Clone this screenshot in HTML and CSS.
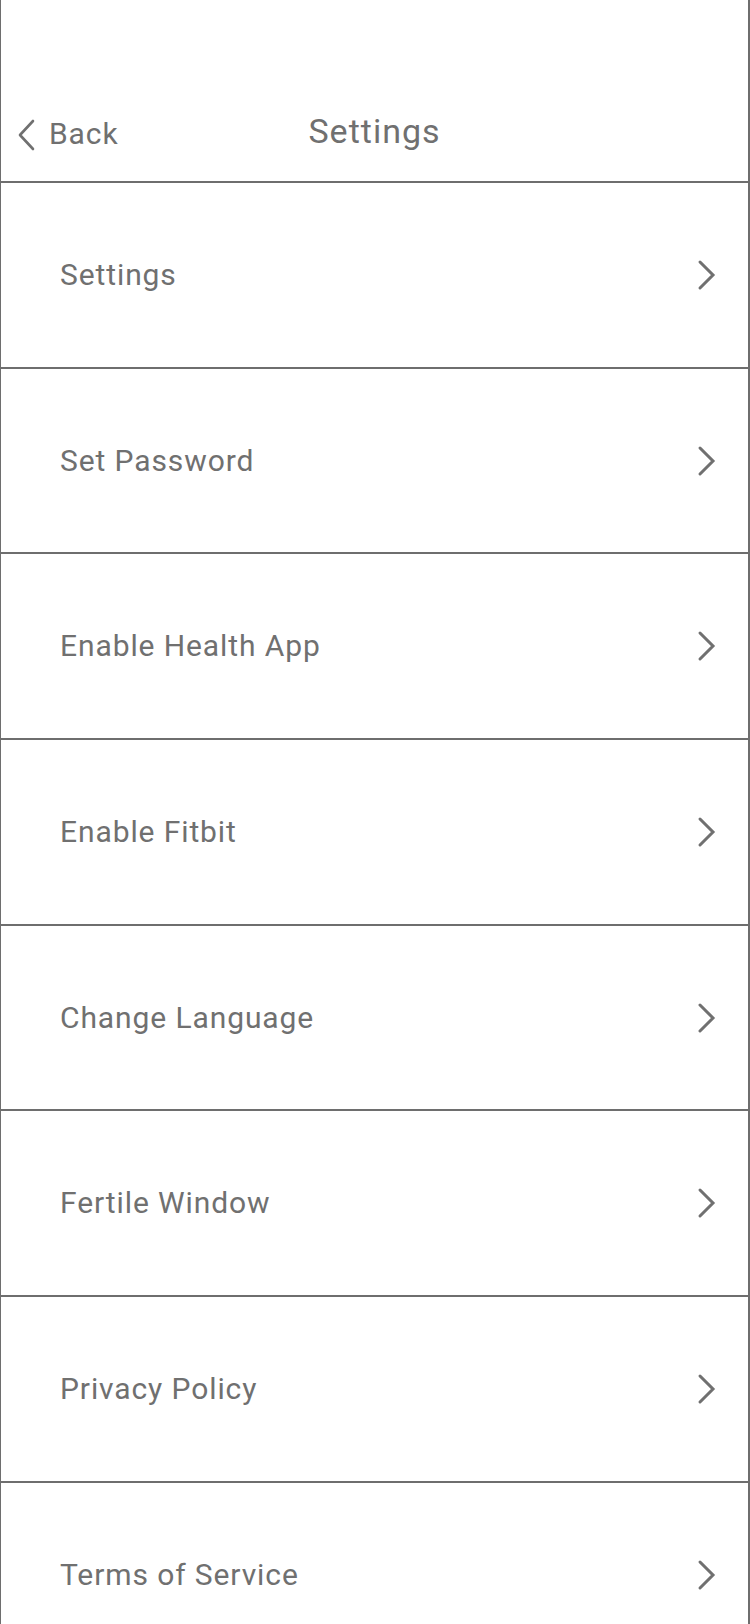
FILE: index.html
```html
<!DOCTYPE html>
<html lang="en">
<head>
<meta charset="utf-8">
<title>Settings</title>
<link rel="stylesheet" href="styles.css">
</head>
<body>
<div class="screen">
  <header class="nav">
    <a class="back">
      <svg class="back-icon" width="18" height="32" viewBox="0 0 18 32" aria-hidden="true"><polyline points="15,2 2,16 15,30" fill="none" stroke="#707070" stroke-width="2.6" stroke-linecap="round" stroke-linejoin="round"/></svg>
      <span>Back</span>
    </a>
    <h1 class="title">Settings</h1>
    <span class="spacer"></span>
  </header>
  <ul class="list">
    <li class="row"><span class="label">Settings</span><svg class="chev" width="20" height="32" viewBox="0 0 20 32"><polyline points="3,3 16,16 3,29" fill="none" stroke="#707070" stroke-width="3" stroke-linecap="round"/></svg></li>
    <li class="row"><span class="label">Set Password</span><svg class="chev" width="20" height="32" viewBox="0 0 20 32"><polyline points="3,3 16,16 3,29" fill="none" stroke="#707070" stroke-width="3" stroke-linecap="round"/></svg></li>
    <li class="row"><span class="label">Enable Health App</span><svg class="chev" width="20" height="32" viewBox="0 0 20 32"><polyline points="3,3 16,16 3,29" fill="none" stroke="#707070" stroke-width="3" stroke-linecap="round"/></svg></li>
    <li class="row"><span class="label">Enable Fitbit</span><svg class="chev" width="20" height="32" viewBox="0 0 20 32"><polyline points="3,3 16,16 3,29" fill="none" stroke="#707070" stroke-width="3" stroke-linecap="round"/></svg></li>
    <li class="row"><span class="label">Change Language</span><svg class="chev" width="20" height="32" viewBox="0 0 20 32"><polyline points="3,3 16,16 3,29" fill="none" stroke="#707070" stroke-width="3" stroke-linecap="round"/></svg></li>
    <li class="row"><span class="label">Fertile Window</span><svg class="chev" width="20" height="32" viewBox="0 0 20 32"><polyline points="3,3 16,16 3,29" fill="none" stroke="#707070" stroke-width="3" stroke-linecap="round"/></svg></li>
    <li class="row"><span class="label">Privacy Policy</span><svg class="chev" width="20" height="32" viewBox="0 0 20 32"><polyline points="3,3 16,16 3,29" fill="none" stroke="#707070" stroke-width="3" stroke-linecap="round"/></svg></li>
    <li class="row"><span class="label">Terms of Service</span><svg class="chev" width="20" height="32" viewBox="0 0 20 32"><polyline points="3,3 16,16 3,29" fill="none" stroke="#707070" stroke-width="3" stroke-linecap="round"/></svg></li>
  </ul>
</div>
</body>
</html>
```

FILE: styles.css
```css
html, body {
  margin: 0;
  padding: 0;
  background: #ffffff;
}

body {
  font-family: Roboto, "Liberation Sans", Arial, sans-serif;
  color: #707070;
}

.screen {
  width: 750px;
  height: 1624px;
  box-sizing: border-box;
  border-left: 1px solid #6e6e6e;
  border-right: 2px solid #6e6e6e;
  overflow: hidden;
}

.nav {
  height: 183px;
  box-sizing: border-box;
  border-bottom: 2px solid #6e6e6e;
  padding-top: 111px;
  display: grid;
  grid-template-columns: 1fr auto 1fr;
  align-items: start;
}

.back {
  display: flex;
  align-items: center;
  gap: 13px;
  padding-left: 17px;
  margin-top: 3px;
  font-size: 30px;
  line-height: 40px;
  letter-spacing: 0.9px;
  color: #707070;
}

.back-icon {
  display: block;
  margin-top: 1px;
}

.title {
  margin: 0;
  font-size: 34px;
  line-height: 40px;
  font-weight: 400;
  letter-spacing: 1px;
  color: #707070;
  text-align: center;
}

.list {
  list-style: none;
  margin: 0;
  padding: 0;
}

.row {
  height: 185.7px;
  box-sizing: border-box;
  border-bottom: 2px solid #6e6e6e;
  display: flex;
  align-items: center;
  justify-content: space-between;
  padding-left: 59px;
  padding-right: 31px;
}

.label {
  font-size: 30px;
  line-height: 40px;
  letter-spacing: 0.9px;
  color: #707070;
}

.chev {
  display: block;
}
```
